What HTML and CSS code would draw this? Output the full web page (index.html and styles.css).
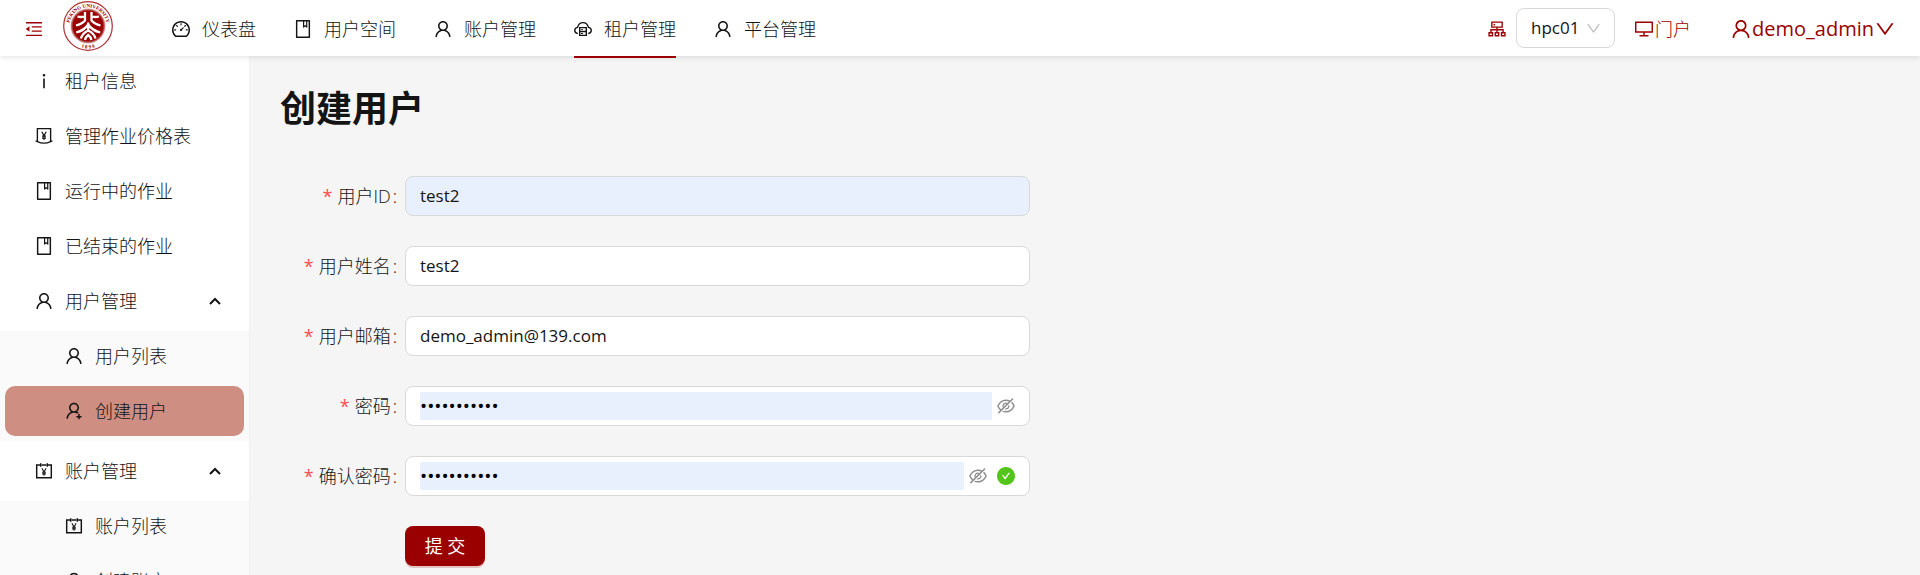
FILE: index.html
```html
<!DOCTYPE html>
<html lang="zh-CN">
<head>
<meta charset="utf-8">
<title>创建用户</title>
<link rel="stylesheet" href="styles.css">
</head>
<body>
<svg class="sprite" aria-hidden="true">
  <symbol id="user" viewBox="64 64 896 896"><path d="M858.5 763.6a374 374 0 00-80.6-119.5 375.63 375.63 0 00-119.5-80.6c-.4-.2-.8-.3-1.2-.5C719.5 518 760 444.7 760 362c0-137-111-248-248-248S264 225 264 362c0 82.7 40.5 156 102.8 201.1-.4.2-.8.3-1.2.5-44.8 18.9-85 46-119.5 80.6a375.63 375.63 0 00-80.6 119.5A371.7 371.7 0 00136 901.8a8 8 0 008 8.2h60c4.4 0 7.9-3.5 8-7.8 2-77.2 33-149.5 87.8-204.3 56.7-56.7 132-87.9 212.2-87.9s155.5 31.2 212.2 87.9C779 752.7 810 825 812 902.2c.1 4.4 3.6 7.8 8 7.8h60a8 8 0 008-8.2c-1-47.8-10.9-94.3-29.5-138.2zM512 534c-45.9 0-89.1-17.9-121.6-50.4S340 407.9 340 362c0-45.9 17.9-89.1 50.4-121.6S466.1 190 512 190s89.1 17.9 121.6 50.4S684 316.1 684 362c0 45.9-17.9 89.1-50.4 121.6S557.9 534 512 534z"/></symbol>
  <symbol id="user-add" viewBox="64 64 896 896"><path d="M678.3 642.4c24.2-13 51.9-20.4 81.4-20.4h.1c3 0 4.4-3.6 2.2-5.6a371.67 371.67 0 00-103.7-65.8c-.4-.2-.8-.3-1.2-.5C719.2 505 759.6 431.7 759.6 349c0-137-110.8-248-247.5-248S264.7 212 264.7 349c0 82.7 40.4 156 102.6 201.1-.4.2-.8.3-1.2.5-44.7 18.9-84.8 46-119.3 80.6a373.42 373.42 0 00-80.4 119.5A373.6 373.6 0 00137 888.8a8 8 0 008 8.2h59.9c4.3 0 7.9-3.5 8-7.8 2-77.2 32.9-149.5 87.6-204.3C357 628.2 432.2 597 512.2 597c56.7 0 111.1 15.7 158 45.1a8.1 8.1 0 008.1.3zM512.2 521c-45.8 0-88.9-17.9-121.4-50.4A171.2 171.2 0 01340.5 349c0-45.9 17.9-89.1 50.3-121.6S466.3 177 512.2 177s88.9 17.9 121.4 50.4A171.2 171.2 0 01683.9 349c0 45.9-17.9 89.1-50.3 121.6C601.1 503.1 558 521 512.2 521zM880 759h-84v-84c0-4.4-3.6-8-8-8h-56c-4.4 0-8 3.6-8 8v84h-84c-4.4 0-8 3.6-8 8v56c0 4.4 3.6 8 8 8h84v84c0 4.4 3.6 8 8 8h56c4.4 0 8-3.6 8-8v-84h84c4.4 0 8-3.6 8-8v-56c0-4.4-3.6-8-8-8z"/></symbol>
  <symbol id="fold" viewBox="64 64 896 896"><path d="M408 442h480c4.4 0 8-3.6 8-8v-56c0-4.4-3.6-8-8-8H408c-4.4 0-8 3.6-8 8v56c0 4.4 3.6 8 8 8zm-8 204c0 4.4 3.6 8 8 8h480c4.4 0 8-3.6 8-8v-56c0-4.4-3.6-8-8-8H408c-4.4 0-8 3.6-8 8v56zm504-486H120c-4.4 0-8 3.6-8 8v56c0 4.4 3.6 8 8 8h784c4.4 0 8-3.6 8-8v-56c0-4.4-3.6-8-8-8zm0 632H120c-4.4 0-8 3.6-8 8v56c0 4.4 3.6 8 8 8h784c4.4 0 8-3.6 8-8v-56c0-4.4-3.6-8-8-8zM115.4 518.9L271.7 642c5.8 4.6 14.4.5 14.4-6.9V388.9c0-7.4-8.5-11.5-14.4-6.9L115.4 505.1a8.74 8.74 0 000 13.8z"/></symbol>
  <symbol id="dashboard" viewBox="64 64 896 896"><path d="M924.8 385.6a446.7 446.7 0 00-96-142.4 446.7 446.7 0 00-142.4-96C631.1 123.8 572.5 112 512 112s-119.1 11.8-174.4 35.2a446.7 446.7 0 00-142.4 96 446.7 446.7 0 00-96 142.4C75.8 440.9 64 499.5 64 560c0 132.7 58.3 257.7 159.9 343.1l1.7 1.4c5.8 4.8 13.1 7.5 20.6 7.5h531.7c7.5 0 14.8-2.7 20.6-7.5l1.7-1.4C901.7 817.7 960 692.7 960 560c0-60.5-11.9-119.1-35.2-174.4zM761.4 836H262.6A371.12 371.12 0 01140 560c0-99.4 38.7-192.8 109-263 70.3-70.3 163.7-109 263-109 99.4 0 192.8 38.7 263 109 70.3 70.3 109 163.7 109 263 0 105.6-44.5 205.5-122.6 276zM623.5 421.5a8.03 8.03 0 00-11.3 0L527.7 506c-18.7-5-39.4-.2-54.1 14.5a55.95 55.95 0 000 79.2 55.95 55.95 0 0079.2 0 55.87 55.87 0 0014.5-54.1l84.5-84.5c3.1-3.1 3.1-8.2 0-11.3l-28.3-28.3zM490 320h44c4.4 0 8-3.6 8-8v-80c0-4.4-3.6-8-8-8h-44c-4.4 0-8 3.6-8 8v80c0 4.4 3.6 8 8 8zm260 218v44c0 4.4 3.6 8 8 8h80c4.4 0 8-3.6 8-8v-44c0-4.4-3.6-8-8-8h-80c-4.4 0-8 3.6-8 8zm12.7-197.2l-31.1-31.1a8.03 8.03 0 00-11.3 0l-56.6 56.6a8.03 8.03 0 000 11.3l31.1 31.1c3.1 3.1 8.2 3.1 11.3 0l56.6-56.6c3.1-3.1 3.1-8.2 0-11.3zm-458.6-31.1a8.03 8.03 0 00-11.3 0l-31.1 31.1a8.03 8.03 0 000 11.3l56.6 56.6c3.1 3.1 8.2 3.1 11.3 0l31.1-31.1c3.1-3.1 3.1-8.2 0-11.3l-56.6-56.6zM262 530h-80c-4.4 0-8 3.6-8 8v44c0 4.4 3.6 8 8 8h80c4.4 0 8-3.6 8-8v-44c0-4.4-3.6-8-8-8z"/></symbol>
  <symbol id="book" viewBox="64 64 896 896"><path d="M832 64H192c-17.7 0-32 14.3-32 32v832c0 17.7 14.3 32 32 32h640c17.7 0 32-14.3 32-32V96c0-17.7-14.3-32-32-32zm-260 72h96v209.9L621.5 312 572 347.4V136zm220 752H232V136h280v296.9c0 3.3 1 6.6 3 9.3a15.9 15.9 0 0022.3 3.7l83.8-59.9 81.4 59.4c2.7 2 6 3.1 9.4 3.1 8.8 0 16-7.2 16-16V136h64v752z"/></symbol>
  <symbol id="cloud" viewBox="64 64 896 896"><g fill="none" stroke="currentColor" stroke-width="70"><path d="M250 735C155 720 100 662 100 590c0-82 50-140 136-158C282 282 390 195 512 195s230 87 276 237c86 18 136 76 136 158 0 72-55 130-150 145"/><path d="M347 444h330v384H347zM347 636h330"/></g><path d="M412 520h100v45H412zM412 710h100v45H412z"/></symbol>
  <symbol id="cluster" viewBox="64 64 896 896"><g fill="none" stroke="currentColor" stroke-width="68"><path d="M254 170h516v250H254zM512 420v250M210 680V550h604v130M116 700h172v150H116zM426 700h172v150H426zM736 700h172v150H736z"/></g><circle cx="380" cy="295" r="42"/></symbol>
  <symbol id="desktop" viewBox="64 64 896 896"><path d="M928 140H96c-17.7 0-32 14.3-32 32v496c0 17.7 14.3 32 32 32h380v112H304c-8.8 0-16 7.2-16 16v48c0 4.4 3.6 8 8 8h432c4.4 0 8-3.6 8-8v-48c0-8.8-7.2-16-16-16H548V700h380c17.7 0 32-14.3 32-32V172c0-17.7-14.3-32-32-32zm-40 488H136V212h752v416z"/></symbol>
  <symbol id="down" viewBox="64 64 896 896"><path d="M884 256h-75c-5.1 0-9.9 2.5-12.9 6.6L512 654.2 227.9 262.6c-3-4.1-7.8-6.6-12.9-6.6h-75c-6.5 0-10.3 7.4-6.5 12.7l352.6 486.1c12.8 17.6 39 17.6 51.7 0l352.6-486.1c3.9-5.3.1-12.7-6.4-12.7z"/></symbol>
  <symbol id="info" viewBox="64 64 896 896"><path d="M448 224a64 64 0 10128 0 64 64 0 10-128 0zm96 168h-64c-4.4 0-8 3.6-8 8v464c0 4.4 3.6 8 8 8h64c4.4 0 8-3.6 8-8V400c0-4.4-3.6-8-8-8z"/></symbol>
  <symbol id="money" viewBox="64 64 896 896"><g fill="none" stroke="currentColor" stroke-width="68"><path d="M183 790V148h658v642M96 750l87 40c110 52 220 78 329 78s219-26 329-78l87-40"/><path d="M400 300l112 190 112-190M512 490v220M410 520h204M410 615h204" stroke-width="60"/></g></symbol>
  <symbol id="account" viewBox="64 64 896 896"><g fill="none" stroke="currentColor" stroke-width="72"><path d="M312 218H148v626h728V218H712M400 218h224M348 130v170M676 130v170"/><path d="M406 380l106 180 106-180M512 550v200M420 575h184M420 655h184" stroke-width="54"/></g></symbol>
  <symbol id="eye-off" viewBox="64 64 896 896"><path d="M942.2 486.2Q889.47 375.11 816.7 305l-50.88 50.88C807.31 395.53 843.45 447.4 874.7 512 791.5 684.2 673.4 766 512 766q-72.67 0-133.87-22.38L323 798.75Q408 838 512 838q288.3 0 430.2-300.3a60.29 60.29 0 000-51.5zm-63.57-320.64L836 122.88a8 8 0 00-11.32 0L715.31 232.2Q624.86 186 512 186q-288.3 0-430.2 300.3a60.3 60.3 0 000 51.5q56.69 119.4 136.5 191.41L112.48 835a8 8 0 000 11.31L155.17 889a8 8 0 0011.31 0l712.15-712.12a8 8 0 000-11.32zM149.3 512C232.6 339.8 350.7 258 512 258c54.54 0 104.13 9.36 149.12 28.39l-70.3 70.3a176 176 0 00-238.13 238.13l-83.42 83.42C223.1 637.49 183.3 582.28 149.3 512zm246.7 0a112.11 112.11 0 01146.2-106.69L401.31 546.2A112 112 0 01396 512z"/><path d="M508 624c-3.46 0-6.87-.16-10.25-.47l-52.82 52.82a176.09 176.09 0 00227.42-227.42l-52.82 52.82c.31 3.38.47 6.79.47 10.25a111.94 111.94 0 01-112 112z"/></symbol>
  <symbol id="check" viewBox="64 64 896 896"><path d="M512 64C264.6 64 64 264.6 64 512s200.6 448 448 448 448-200.6 448-448S759.4 64 512 64zm193.5 301.7l-210.6 292a31.8 31.8 0 01-51.7 0L318.5 484.9c-3.8-5.3 0-12.7 6.5-12.7h46.9c10.2 0 19.9 4.9 25.9 13.3l71.2 98.8 157.2-218c6-8.3 15.6-13.3 25.9-13.3H699c6.5 0 10.3 7.4 6.5 12.7z"/></symbol>
  <symbol id="up" viewBox="0 0 12 12"><path d="M1 9l5-5 5 5" fill="none" stroke="currentColor" stroke-width="2"/></symbol>
</svg>

<div class="app">
  <header class="header">
    <button class="fold" type="button" aria-label="收起菜单"><svg class="icon"><use href="#fold"/></svg></button>
    <a class="logo" href="#" aria-label="首页">
      <svg viewBox="0 0 50 50">
        <defs>
          <radialGradient id="disc"><stop offset="0.85" stop-color="#9b0000"/><stop offset="1" stop-color="#9b0000" stop-opacity="0.3"/></radialGradient>
          <path id="ring-top" d="M9.500 35.500A18.700 18.700 0 1 1 40.500 35.500"/>
          <path id="ring-bottom" d="M11 42.500A22.500 22.500 0 0 0 39 42.500"/>
        </defs>
        <circle cx="25" cy="25" r="24.300" fill="#fff" stroke="#b03034" stroke-width="1.200"/>
        <circle cx="25" cy="25" r="17.500" fill="url(#disc)"/>
        <text class="seal"><textPath href="#ring-top" startOffset="50%">PEKING UNIVERSITY</textPath></text>
        <text class="seal"><textPath href="#ring-bottom" startOffset="50%">1 8 9 8</textPath></text>
        <g fill="none" stroke="#fff" stroke-width="2.300">
          <path d="M22 11v8.500q-3 3.500-9 5M28.500 11v8.500q3 3.500 9 5M14.500 15.500q3 1 7.500 0M36 15.500q-3 1-7.500 0"/>
          <path d="M25.200 21.500v9M25.200 23.500q-4 6-12 8M25.200 23.500q4 6 12 8M18 37.500q1-5 7.200-8q6.200 3 7.200 8M22 39q.5-3 3.200-5q2.700 2 3.200 5"/>
        </g>
      </svg>
    </a>
    <nav class="topnav">
      <a href="#"><svg class="icon"><use href="#dashboard"/></svg>仪表盘</a>
      <a href="#"><svg class="icon"><use href="#book"/></svg>用户空间</a>
      <a href="#"><svg class="icon"><use href="#user"/></svg>账户管理</a>
      <a href="#" class="active" aria-current="page"><svg class="icon"><use href="#cloud"/></svg>租户管理</a>
      <a href="#"><svg class="icon"><use href="#user"/></svg>平台管理</a>
    </nav>
    <div class="tools">
      <svg class="icon"><use href="#cluster"/></svg>
      <span class="cluster">
        <select aria-label="集群"><option>hpc01</option></select>
        <svg class="arrow"><use href="#down"/></svg>
      </span>
      <a class="portal" href="#"><svg class="icon"><use href="#desktop"/></svg>门户</a>
      <button class="account" type="button"><svg class="icon"><use href="#user"/></svg>demo_admin<svg class="icon"><use href="#down"/></svg></button>
    </div>
  </header>

  <div class="body">
    <aside class="sidebar">
      <ul class="menu">
        <li><a class="item" href="#"><svg class="icon"><use href="#info"/></svg>租户信息</a></li>
        <li><a class="item" href="#"><svg class="icon"><use href="#money"/></svg>管理作业价格表</a></li>
        <li><a class="item" href="#"><svg class="icon"><use href="#book"/></svg>运行中的作业</a></li>
        <li><a class="item" href="#"><svg class="icon"><use href="#book"/></svg>已结束的作业</a></li>
        <li>
          <button class="item" type="button" aria-expanded="true"><svg class="icon"><use href="#user"/></svg>用户管理<svg class="caret"><use href="#up"/></svg></button>
          <ul class="submenu">
            <li><a class="item" href="#"><svg class="icon"><use href="#user"/></svg>用户列表</a></li>
            <li><a class="item selected" href="#" aria-current="page"><svg class="icon"><use href="#user-add"/></svg>创建用户</a></li>
          </ul>
        </li>
        <li>
          <button class="item" type="button" aria-expanded="true"><svg class="icon"><use href="#account"/></svg>账户管理<svg class="caret"><use href="#up"/></svg></button>
          <ul class="submenu">
            <li><a class="item" href="#"><svg class="icon"><use href="#account"/></svg>账户列表</a></li>
            <li><a class="item" href="#"><svg class="icon"><use href="#user-add"/></svg>创建账户</a></li>
          </ul>
        </li>
      </ul>
    </aside>

    <main class="main">
      <h1>创建用户</h1>
      <form class="form">
        <label for="uid">用户ID</label>
        <div class="field autofilled"><input id="uid" type="text" value="test2" required></div>
        <label for="name">用户姓名</label>
        <div class="field"><input id="name" type="text" value="test2" required></div>
        <label for="mail">用户邮箱</label>
        <div class="field"><input id="mail" type="email" value="demo_admin@139.com" required></div>
        <label for="pw">密码</label>
        <div class="field secret"><input id="pw" type="password" value="abcdefghijk" required><button class="eye" type="button" aria-label="显示密码"><svg class="icon"><use href="#eye-off"/></svg></button></div>
        <label for="pw2">确认密码</label>
        <div class="field secret"><input id="pw2" type="password" value="abcdefghijk" required><button class="eye" type="button" aria-label="显示密码"><svg class="icon"><use href="#eye-off"/></svg></button><svg class="icon ok"><use href="#check"/></svg></div>
        <button class="submit" type="submit">提 交</button>
      </form>
    </main>
  </div>
</div>
</body>
</html>
```

FILE: styles.css
```css
* { box-sizing: border-box; }

body {
  margin: 0;
  font: 300 18px/28px "Open Sans", "Noto Sans CJK SC", sans-serif;
  color: #141414;
  background: #f5f5f5;
}

a { color: inherit; text-decoration: none; }

button, input, select {
  font: inherit;
  color: inherit;
  background: none;
  border: 0;
  padding: 0;
  margin: 0;
}

ul { list-style: none; margin: 0; padding: 0; }

.sprite { display: none; }
.icon { width: 18px; height: 18px; flex: none; fill: currentColor; }

.app { display: flex; flex-direction: column; height: 100vh; overflow: hidden; }

.header {
  display: flex;
  flex: none;
  align-items: center;
  height: 56px;
  padding: 2px 25px 0;
  background: #fff;
  box-shadow: 0 1px 6px rgba(0, 0, 0, 0.12);
  position: relative;
}
.fold { display: flex; color: #9b0000; }
.logo { display: flex; margin: 0 34px 6px 20px; }
.logo svg { width: 50px; height: 50px; }
.seal {
  font: 700 5px/5px "Liberation Serif", serif;
  fill: #9b0000;
  text-anchor: middle;
}

.topnav { display: flex; align-self: stretch; gap: 38px; padding-left: 25px; }
.topnav a {
  display: flex;
  align-items: center;
  gap: 12px;
  height: 56px;
  border-bottom: 2px solid transparent;
}
.topnav a.active { border-color: #9b0000; }

.tools { display: flex; align-items: center; margin-left: auto; color: #9b0000; }
.cluster {
  display: flex;
  align-items: center;
  position: relative;
  margin: 0 20px 2px 10px;
  color: #141414;
}
.cluster select {
  appearance: none;
  width: 99px;
  height: 40px;
  padding: 0 14px;
  border: 1px solid #d9d9d9;
  border-radius: 8px;
  background: #fff;
  font-size: 17px;
  font-weight: 400;
}
.arrow {
  position: absolute;
  right: 14px;
  width: 15px;
  height: 15px;
  fill: #bfbfbf;
  pointer-events: none;
}
.portal { display: flex; align-items: center; gap: 2px; margin-right: 40px; }
.account { display: flex; align-items: center; gap: 1px; font-size: 20px; font-weight: 400; }
.account .icon { width: 20px; height: 20px; }

.body { display: flex; flex: 1; min-height: 0; }
.sidebar {
  flex: none;
  width: 250px;
  background: #fff;
  overflow: hidden;
  border-right: 1px solid #f0f0f0;
}
.menu, .submenu, .menu > li { display: flex; flex-direction: column; gap: 5px; }
.submenu { padding-bottom: 5px; background: #fafafa; }
.item {
  display: flex;
  align-items: center;
  gap: 12px;
  height: 50px;
  margin: 0 5px;
  padding: 0 23px 0 30px;
  border-radius: 10px;
}
.submenu .item { padding-left: 60px; }
.item.selected { background: #ce8e82; }
.caret { width: 12px; height: 12px; margin-left: auto; }

.main { flex: 1; min-width: 0; padding: 26px 30px; }
h1 { margin: 0 0 40px; font-size: 36px; line-height: 54px; font-weight: 700; }

.form {
  display: grid;
  grid-template-columns: 125px minmax(0, 625px);
  row-gap: 30px;
  align-items: center;
}
.form label { padding-right: 8px; text-align: right; }
.form label::before { content: "*"; margin-right: 5px; color: #ff4d4f; font-weight: 400; }
.form label::after { content: ":"; margin-left: 2px; }
.field {
  display: flex;
  align-items: center;
  gap: 5px;
  height: 40px;
  padding: 0 14px;
  border: 1px solid #d9d9d9;
  border-radius: 8px;
  background: #fff;
}
.field input { flex: 1; min-width: 0; height: 28px; outline: 0; font-size: 17px; font-weight: 400; }
.field.secret input { font-size: 19px; color: #000; }
.autofilled, .secret input { background: #e8f0fe; }
.eye { display: flex; color: #8c8c8c; }
.ok { margin-left: 5px; color: #52c41a; }
.submit {
  grid-column: 2;
  justify-self: start;
  width: 80px;
  height: 40px;
  border-radius: 8px;
  background: #9b0000;
  color: #fff;
  font-weight: 400;
  box-shadow: 0 2px 0 rgba(155, 0, 0, 0.2);
}
```
